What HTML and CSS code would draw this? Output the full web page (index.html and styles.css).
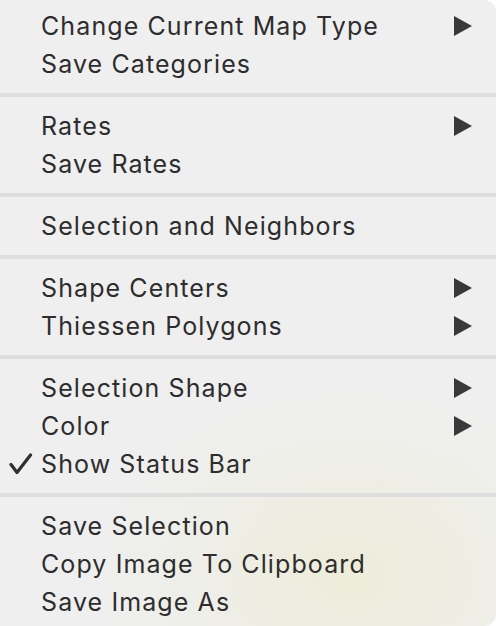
FILE: index.html
```html
<!DOCTYPE html>
<html>
<head>
<meta charset="utf-8">
<link rel="stylesheet" href="styles.css">
</head>
<body>
<div class="menu">
  <div class="item"><span class="label">Change Current Map Type</span><span class="arrow"></span></div>
  <div class="item"><span class="label">Save Categories</span></div>
  <div class="sep"></div>
  <div class="item"><span class="label">Rates</span><span class="arrow"></span></div>
  <div class="item"><span class="label">Save Rates</span></div>
  <div class="sep"></div>
  <div class="item"><span class="label">Selection and Neighbors</span></div>
  <div class="sep"></div>
  <div class="item"><span class="label">Shape Centers</span><span class="arrow"></span></div>
  <div class="item"><span class="label">Thiessen Polygons</span><span class="arrow"></span></div>
  <div class="sep"></div>
  <div class="item"><span class="label">Selection Shape</span><span class="arrow"></span></div>
  <div class="item"><span class="label">Color</span><span class="arrow"></span></div>
  <div class="item checked"><svg class="check" width="24" height="22" viewBox="0 0 24 22"><path d="M2 11.5 L8 19.5 L21.5 2" fill="none" stroke="#2f2f2f" stroke-width="3.2" stroke-linecap="round" stroke-linejoin="round"/></svg><span class="label">Show Status Bar</span></div>
  <div class="sep"></div>
  <div class="item"><span class="label">Save Selection</span></div>
  <div class="item"><span class="label">Copy Image To Clipboard</span></div>
  <div class="item"><span class="label">Save Image As</span></div>
</div>
</body>
</html>
```
FILE: styles.css
```css
html, body {
  margin: 0;
  padding: 0;
  background: #ffffff;
}
body {
  width: 496px;
  height: 626px;
  overflow: hidden;
}
.menu {
  width: 496px;
  height: 626px;
  box-sizing: border-box;
  padding-top: 7px;
  border-radius: 0 12px 12px 0;
  background:
    radial-gradient(ellipse 260px 190px at 350px 575px, rgba(238, 236, 214, 0.85), rgba(238, 237, 222, 0.4) 60%, rgba(239, 239, 239, 0) 100%),
    #efefef;
  font-family: Inter, "Liberation Sans", Arial, sans-serif;
  font-size: 25px;
  letter-spacing: 1.1px;
  color: #2d2d2d;
}
.item {
  position: relative;
  display: flex;
  align-items: center;
  height: 38px;
  line-height: 38px;
  padding-left: 41px;
  padding-right: 24px;
}
.label {
  flex: 1;
  white-space: nowrap;
}
.arrow {
  width: 0;
  height: 0;
  border-top: 10px solid transparent;
  border-bottom: 10px solid transparent;
  border-left: 18px solid #393939;
}
.check {
  position: absolute;
  left: 9px;
  top: 8px;
}
.sep {
  height: 4px;
  margin: 10px 0;
  background: #dedede;
}
```
